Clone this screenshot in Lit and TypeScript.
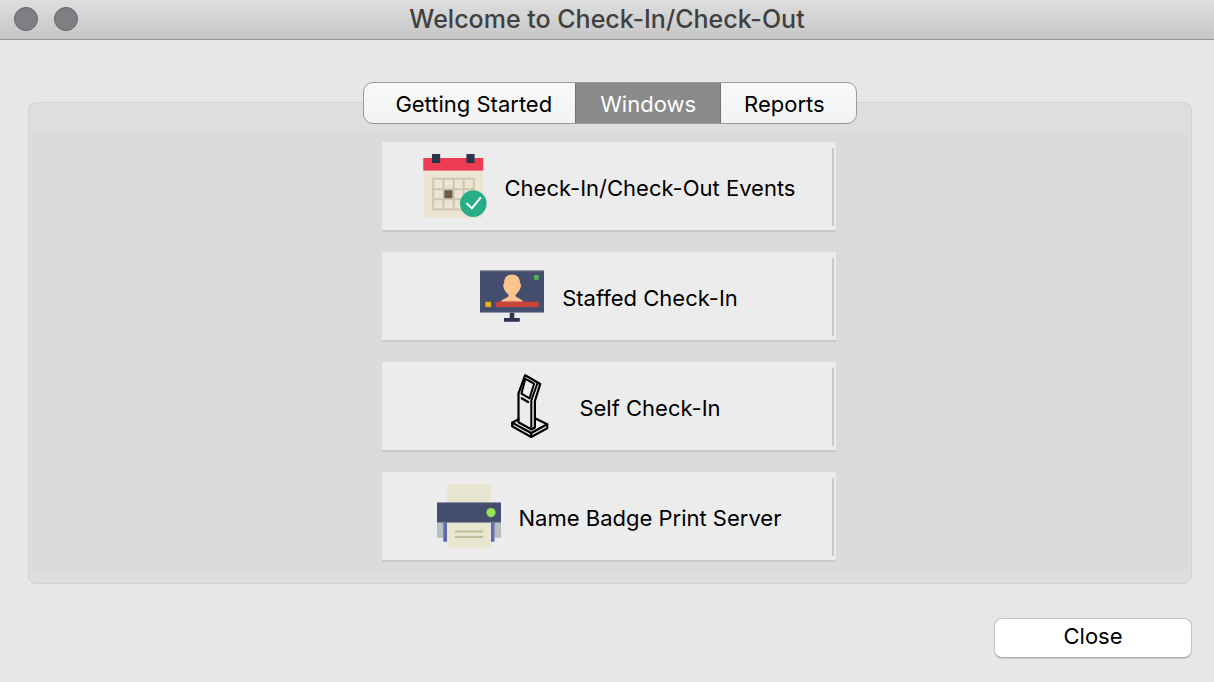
import { LitElement, html, css, svg } from "lit";
import { customElement, state } from "lit/decorators.js";

const calendarIcon = svg`
  <rect x="0.5" y="4" width="59.5" height="60" fill="#ece5d3"/>
  <rect x="0.3" y="4" width="59.9" height="12.6" fill="#ec3b53"/>
  <rect x="9" y="0" width="8.2" height="9" fill="#29374c"/>
  <rect x="43.4" y="0" width="8.2" height="9" fill="#29374c"/>
  <path d="M10.2 24.8H50.8V55.4H10.2ZM20.5 24.8V55.4M30.7 24.8V55.4M40.7 24.8V55.4M10.2 35.2H50.8M10.2 45.3H50.8" fill="none" stroke="#cec6af" stroke-width="2"/>
  <rect x="21.3" y="36.2" width="8.2" height="8" fill="#6f5b4b"/>
  <circle cx="50.3" cy="49.6" r="13.3" fill="#27ae88"/>
  <path d="M44 49.6L48.8 54.4L57.4 43.8" fill="none" stroke="#fff" stroke-width="2" stroke-linecap="round" stroke-linejoin="round"/>`;

const monitorIcon = svg`
  <rect x="0" y="6.4" width="64" height="42.2" fill="#454d6e"/>
  <path d="M0 6.8H64M0 48.4H64" stroke="#9a9eb0" stroke-width="0.7"/>
  <path d="M29.7 48.8H34.3V54H39.8V57.8H24V54H29.7Z" fill="#2f3550"/>
  <path d="M32 10.6C36.5 10.6 40.2 13.5 40 19C41.3 20 41.2 22.5 40.3 24.5C39 27.8 36.5 29.5 35.4 31.5C35.6 33.5 41 34.8 43.7 37.8H20.3C23 34.8 28.6 33.5 28.8 31.5C27.7 29.5 25 27.8 23.9 24.5C23 22.5 22.9 20 24.2 19C24 13.5 27.5 10.6 32 10.6Z" fill="#fac48c"/>
  <rect x="15.6" y="37.7" width="43" height="5.4" fill="#c9443a"/>
  <rect x="5.4" y="37.7" width="5.6" height="5.4" fill="#e9b30d"/>
  <rect x="54" y="11" width="4.8" height="4.8" fill="#52ae5c"/>`;

const kioskIcon = svg`
  <g fill="none" stroke="#000" stroke-width="2.2" stroke-linejoin="round" stroke-linecap="round">
    <path d="M28.2 1.2L43.2 10L37.9 27V53.5L34.5 55.5L21.5 48.3V19.3Z"/>
    <path d="M28.3 4.8L37.1 9.7L32.5 24.4L24.5 19.6Z" stroke-width="2"/>
    <path d="M40.5 9L34.3 26.3V55" stroke-width="2"/>
    <path d="M24.7 24.2L31.1 28"/>
    <path d="M21.5 45.2L15.2 48.7L34.2 59L50.2 50.3L38.5 44.4"/>
    <path d="M15.2 48.7V52.4L34.2 63L50.2 54.3V50.3M34.2 59V63"/>
  </g>`;

const printerIcon = svg`
  <rect x="10" y="0" width="44" height="19" fill="#e8e6d0"/>
  <rect x="0" y="38" width="64" height="15.8" fill="#b8bebc"/>
  <rect x="6" y="38" width="51.8" height="19.6" fill="#8089bd"/>
  <rect x="7" y="38" width="49.6" height="19.6" fill="#5e6ab0"/>
  <rect x="10" y="38" width="44" height="25.8" fill="#e8e6d0"/>
  <rect x="0" y="18.4" width="64" height="20.2" fill="#454d6e"/>
  <path d="M0 18.6H64M0 38.4H64" stroke="#8e93a8" stroke-width="0.7"/>
  <circle cx="54" cy="28.6" r="4.6" fill="#94e551"/>
  <path d="M18 47.4H46.2M18 53H46.2" stroke="#c2bd98" stroke-width="2"/>`;

const launchers = [
  { label: "Check-In/Check-Out Events", icon: calendarIcon },
  { label: "Staffed Check-In", icon: monitorIcon },
  { label: "Self Check-In", icon: kioskIcon },
  { label: "Name Badge Print Server", icon: printerIcon },
];

@customElement("app-root")
export class AppRoot extends LitElement {
  @state() private tab = "Windows";

  static styles = css`
    :host {
      display: flex;
      flex-direction: column;
      min-height: 100vh;
      background: #e7e7e7;
      color: #000;
      font-family: Inter, "Liberation Sans", sans-serif;
      font-size: 22px;
      line-height: 28px;
    }
    * {
      box-sizing: border-box;
    }
    button {
      margin: 0;
      padding: 0;
      border: 0;
      font: inherit;
      color: inherit;
      white-space: nowrap;
    }
    .titlebar {
      display: grid;
      grid-template-columns: 1fr auto 1fr;
      align-items: center;
      height: 40px;
      padding: 1px 14px 2px;
      background: linear-gradient(#dedede, #c6c6c6);
      border-bottom: 1px solid #949494;
    }
    .lights {
      display: flex;
      gap: 16px;
    }
    .light {
      width: 24px;
      height: 24px;
      border: 1px solid #626165;
      border-radius: 50%;
      background: #7f7e83;
    }
    .title {
      margin: 0;
      font-size: 25px;
      font-weight: 500;
      color: #404040;
    }
    .content {
      display: flex;
      flex-direction: column;
      padding: 42px 22px 24px 28px;
    }
    .tabs {
      display: flex;
      align-self: center;
      z-index: 1;
      margin-bottom: -22px;
      border: 1px solid #999;
      border-radius: 10px;
      overflow: hidden;
      background: linear-gradient(#f8f8f8, #f3f3f3);
    }
    .tab {
      height: 40px;
      padding: 2px 23px 0;
      background: none;
    }
    .tab:first-child {
      padding-left: 31px;
    }
    .tab:last-child {
      padding-right: 31px;
    }
    .tab.active {
      padding: 2px 25px 0;
      background: #8a8a8a;
      box-shadow: inset 1px 0 #757575, inset -1px 0 #757575;
      color: #fff;
    }
    .panel {
      padding: 29px 3px 11px;
      border: 1px solid #d3d3d3;
      border-radius: 8px;
      background: #dedede;
    }
    .launchers {
      display: flex;
      flex-direction: column;
      align-items: center;
      gap: 20px;
      padding: 10px 2px 10px 0;
      background: #dbdbdb;
    }
    .launcher {
      position: relative;
      display: flex;
      align-items: center;
      justify-content: center;
      gap: 18px;
      width: 454px;
      max-width: 100%;
      height: 90px;
      border-bottom: 2px solid #cacaca;
      background: #ececec;
    }
    .launcher::after {
      content: "";
      position: absolute;
      top: 6px;
      right: 2px;
      bottom: 4px;
      width: 2px;
      background: #cacaca;
    }
    .launcher svg {
      width: 64px;
      height: 64px;
    }
    .label {
      padding-top: 4px;
    }
    .close {
      align-self: flex-end;
      width: 198px;
      height: 40px;
      margin-top: 34px;
      padding-bottom: 4px;
      border: 1px solid #c4c4c4;
      border-bottom-color: #ababab;
      border-radius: 8px;
      background: #fff;
      box-shadow: 0 1px 1px #0002;
    }
  `;

  render() {
    return html`
      <header class="titlebar">
        <div class="lights">
          <button class="light" aria-label="Close window"></button>
          <button class="light" aria-label="Minimize window"></button>
        </div>
        <h1 class="title">Welcome to Check-In/Check-Out</h1>
      </header>
      <main class="content">
        <div class="tabs" role="tablist">
          ${["Getting Started", "Windows", "Reports"].map(
            (name) => html`<button
              class="tab ${name === this.tab ? "active" : ""}"
              role="tab"
              aria-selected=${name === this.tab}
              @click=${() => (this.tab = name)}
            >${name}</button>`
          )}
        </div>
        <section class="panel">
          <div class="launchers">
            ${launchers.map(
              (item) => html`<button class="launcher">
                <svg viewBox="0 0 64 64" aria-hidden="true">${item.icon}</svg>
                <span class="label">${item.label}</span>
              </button>`
            )}
          </div>
        </section>
        <button class="close">Close</button>
      </main>
    `;
  }
}
